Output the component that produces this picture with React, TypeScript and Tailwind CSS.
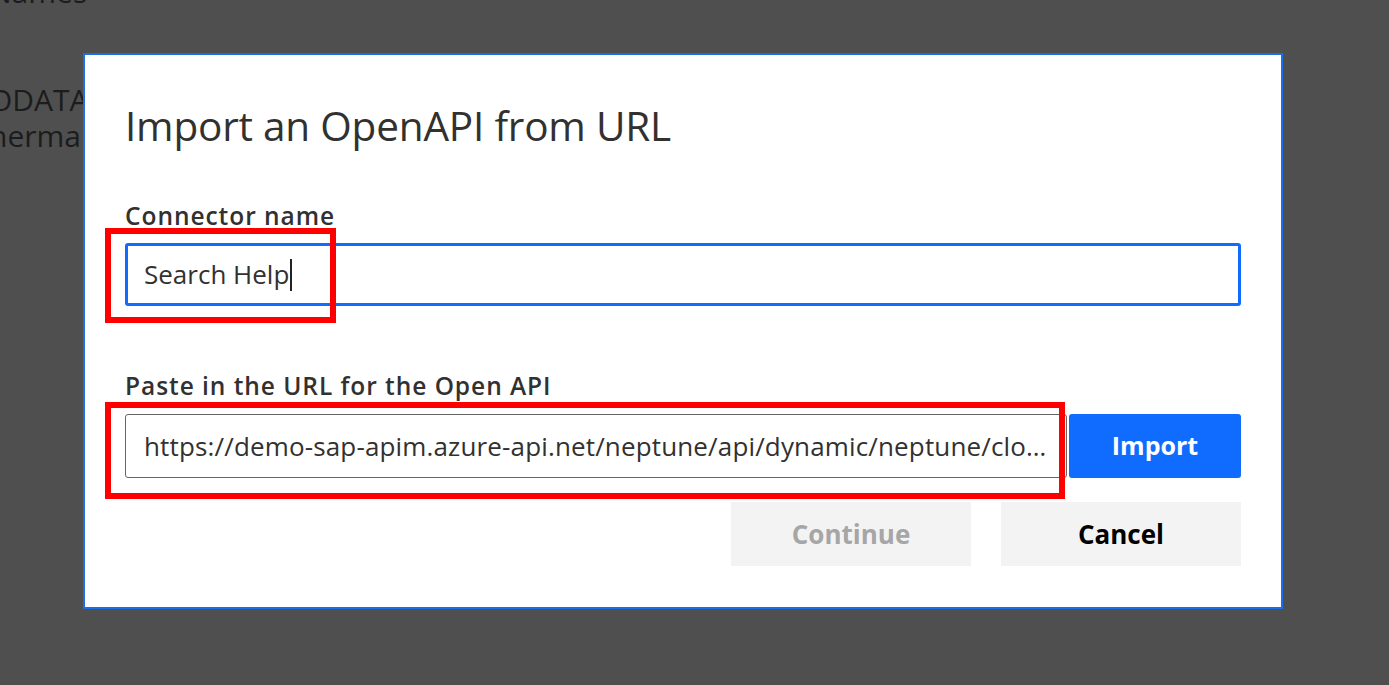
import React from "react";

export default function App() {
  const font = { fontFamily: '"Open Sans", "Noto Sans", sans-serif' };
  return (
    <div className="relative h-[685px] w-[1389px] overflow-hidden bg-[#4f4f4f]" style={font}>
      <div className="text-[30px] leading-[36px] text-[#1c1c1c] -ml-[11px]">
        <div className="-mt-[26px]">Names</div>
        <div className="mt-[72px]">ODATA-</div>
        <div>hermann</div>
      </div>

      <div className="absolute left-[83px] top-[53px] w-[1200px] h-[556px] bg-white border-2 border-[#1a6fe8]">
        <div className="px-[40px] pt-[45px]">
          <h1 className="text-[40.5px] leading-[52px] text-[#323130] font-normal tracking-[-0.2px]">
            Import an OpenAPI from URL
          </h1>
          <div className="mt-[48px] text-[24.5px] leading-[32px] font-semibold text-[#323130] tracking-[0.95px]">Connector name</div>
          <div className="mt-[11px] h-[63px] w-[1116px] rounded-[3px] border-[3px] border-[#0f6cff] flex items-center pl-[16px]">
            <span className="text-[26px] text-[#323130]">Search Help</span>
            <span className="ml-[1px] h-[32px] w-[2px] bg-[#222]" />
          </div>
          <div className="mt-[64px] text-[24.5px] leading-[32px] font-semibold text-[#323130] tracking-[0.95px]">
            Paste in the URL for the Open API
          </div>
          <div className="mt-[12px] flex gap-[2px]">
            <div className="h-[64px] w-[942px] min-w-0 rounded-[3px] border border-[#666] flex items-center px-[18px] overflow-hidden">
              <span className="block min-w-0 w-full text-[26px] text-[#323130] tracking-[0.15px] truncate">
                https://demo-sap-apim.azure-api.net/neptune/api/dynamic/neptune/cloud/searchhelp
              </span>
            </div>
            <button className="h-[64px] w-[172px] rounded-[3px] bg-[#0f6cff] text-white text-[25px] font-bold">
              Import
            </button>
          </div>
          <div className="mt-[24px] flex justify-end gap-[30px]">
            <button className="h-[64px] w-[240px] bg-[#f3f3f3] text-[#a6a6a6] text-[26px] font-bold">Continue</button>
            <button className="h-[64px] w-[240px] bg-[#f3f3f3] text-black text-[26px] font-bold">Cancel</button>
          </div>
        </div>

        <div className="absolute left-[20px] top-[173px] w-[231px] h-[95px] border-[6px] border-[#ff0000]" />
        <div className="absolute left-[20px] top-[347px] w-[960px] h-[97px] border-[6px] border-[#ff0000]" />
      </div>
    </div>
  );
}
